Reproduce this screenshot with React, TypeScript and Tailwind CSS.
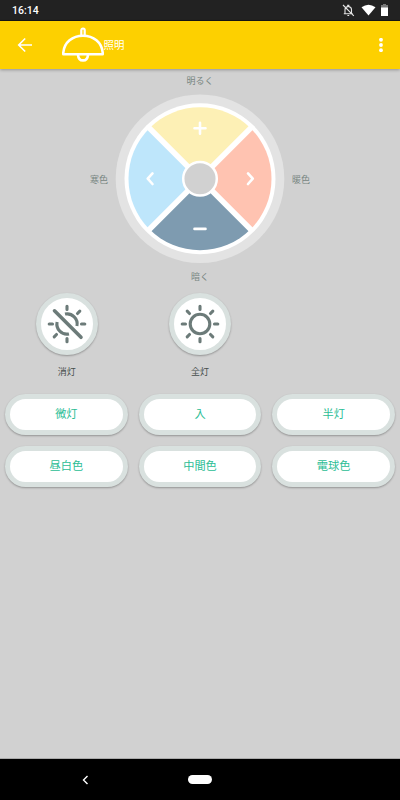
import React from 'react';

const modeButtons = ['微灯', '入', '半灯', '昼白色', '中間色', '電球色'];

const StatusBar: React.FC = () => (
  <div className="flex h-[21px] shrink-0 items-center justify-between border-b border-[#151515] bg-[#222222] pl-3 pr-[12px]">
    <span className="pt-[2px] font-[Roboto] text-[10.5px] font-medium leading-none text-white">16:14</span>
    <div className="flex items-center">
      <svg className="h-[13px] w-[13px]" viewBox="0 0 13 13" fill="none" stroke="#e4e4e4" strokeWidth="1.1">
        <path d="M3 9.5V5.8a3.2 3.2 0 0 1 2.7-3.2V1.2h1.1v1.4a3.2 3.2 0 0 1 2.7 3.2v3.7M1.8 9.8h9M5.4 11.5h1.8M1 1l10.8 10.8" />
      </svg>
      <svg className="ml-[6px] h-[12px] w-[15px]" viewBox="0 0 15 12">
        <path d="M.5 3.2Q7.5-1.8 14.5 3.2L7.5 11.5Z" fill="#fff" />
      </svg>
      <svg className="ml-[5px] h-[12px] w-[7px]" viewBox="0 0 7 12">
        <path d="M2 0h3v1h2v3H0V1h2Z" fill="#777" />
        <path d="M0 3.5h7V12H0Z" fill="#fff" />
      </svg>
    </div>
  </div>
);

const Header: React.FC = () => (
  <header className="z-10 flex h-12 shrink-0 items-center bg-[#fdd000] pl-[17px] pr-[17px] shadow-[0_1px_3px_rgba(0,0,0,0.3)]">
    <svg className="h-4 w-4" viewBox="0 0 16 16" fill="none" stroke="#fff" strokeWidth="1.6">
      <path d="M15 8H2M8.2 1.5 1.7 8l6.5 6.5" />
    </svg>
    <svg className="ml-[29px] h-9 w-[42px]" viewBox="0 0 42 36" fill="none" stroke="#fff" strokeWidth="2.6" strokeLinejoin="round">
      <path d="M1.300 27.300V25.500C2.200 15.500 10.500 8.700 21 8.700S39.800 15.500 40.700 25.500v1.800Z" />
      <path d="M19.300 8.500V3.200a1.700 1.700 0 0 1 3.400 0V8.500" strokeWidth="2.200" />
      <path d="M16 27.800c.3 3.800 2.400 5.600 5 5.600s4.700-1.800 5-5.600" />
    </svg>
    <h1 className="-ml-[0.5px] font-['Noto_Sans_CJK_JP',sans-serif] text-[10.5px] leading-none text-white">照明</h1>
    <svg className="ml-auto h-[14px] w-1" viewBox="0 0 4 14" fill="#fff">
      <circle cx="2" cy="1.8" r="1.9" />
      <circle cx="2" cy="7" r="1.9" />
      <circle cx="2" cy="12.2" r="1.9" />
    </svg>
  </header>
);

const ColorWheel: React.FC = () => (
  <div className="flex flex-col items-center text-[9px] leading-[9px] text-[#788682]">
    <span>明るく</span>
    <div className="mt-[10px] flex items-center gap-2">
      <span>寒色</span>
      <svg className="h-[168px] w-[168px] overflow-visible" viewBox="-84 -83.7 168 168">
        <circle r="84.300" fill="#e3e3e3" />
        <circle r="75.500" fill="#fff" />
        <path d="M0 0-50.560-50.560A71.500 71.500 0 0 1 50.560-50.560Z" fill="#fdf0b5" />
        <path d="M0 0 50.560-50.560A71.500 71.500 0 0 1 50.560 50.560Z" fill="#ffc3b1" />
        <path d="M0 0 50.560 50.560A71.500 71.500 0 0 1-50.560 50.560Z" fill="#7e9bb0" />
        <path d="M0 0-50.560 50.560A71.500 71.500 0 0 1-50.560-50.560Z" fill="#bee6fb" />
        <path d="M-52-52 52 52M52-52-52 52" stroke="#fff" strokeWidth="5.500" />
        <circle r="16.800" fill="#d1d1d1" stroke="#fff" strokeWidth="2.500" />
        <g fill="none" stroke="#fff" strokeWidth="2.600" strokeLinecap="round" strokeLinejoin="round">
          <path d="M-5.500-50.500H5.500M0-56V-45M-5.500 50.200H5.500" />
          <path d="M-47.500-5.300-52.300 0l4.800 5.300M48-5.300 52.800 0l-4.800 5.300" />
        </g>
      </svg>
      <span>暖色</span>
    </div>
    <span className="mt-[9px]">暗く</span>
  </div>
);

const SunIcon: React.FC<{ off?: boolean }> = ({ off }) => (
  <svg className="h-10 w-10" viewBox="-20 -20 40 40" fill="none" stroke="#6c7b79" strokeWidth="3.1" strokeLinecap="round">
    <path d="M0-17.800V-14.500M0 14.500V17.800M-17.800 0H-14.500M14.500 0H17.800M12.800-12.800 10.500-10.500M-12.800 12.800l2.300-2.300" />
    {off ? (
      <>
        <path d="M-2-9.900A10 10 0 0 1 9.900 2M-9.900-2A10 10 0 0 0 2 9.900" strokeLinecap="butt" />
        <path d="M-12.500-13.200 14 13.300" strokeWidth="3.600" />
      </>
    ) : (
      <>
        <circle r="9.800" />
        <path d="M-12.800-12.800l2.300 2.300M12.800 12.800l-2.300-2.300" />
      </>
    )}
  </svg>
);

const RoundButton: React.FC<{ label: string; off?: boolean }> = ({ label, off }) => (
  <div className="flex flex-col items-center">
    <button className="flex h-[62px] w-[62px] items-center justify-center rounded-full border-[5px] border-[#d9e1df] bg-white shadow-[0_1px_2px_rgba(0,0,0,0.3)]">
      <SunIcon off={off} />
    </button>
    <span className="mt-[12px] text-[9px] leading-[9px] text-[#464e4c]">{label}</span>
  </div>
);

const App: React.FC = () => {
  return (
    <div className="flex h-[800px] w-[400px] flex-col overflow-hidden bg-[#d1d1d1] font-['Noto_Sans_CJK_JP',sans-serif]">
      <StatusBar />
      <Header />

      <main className="flex-1 border-b border-[#aaaaaa] pt-[7px]">
        <ColorWheel />

        <div className="mt-[12px] grid grid-cols-3">
          <RoundButton label="消灯" off />
          <RoundButton label="全灯" />
        </div>

        <div className="mt-[17.5px] grid grid-cols-3 gap-x-[11px] gap-y-[11px] px-[5px]">
          {modeButtons.map((label) => (
            <button
              key={label}
              className="h-[41px] rounded-full border-[5px] border-[#d9e1df] bg-white text-[11.2px] leading-none text-[#2bbd95] shadow-[0_1px_2px_rgba(0,0,0,0.3)]"
            >
              {label}
            </button>
          ))}
        </div>
      </main>

      {/* Android navigation bar */}
      <nav className="grid h-[41px] shrink-0 grid-cols-3 items-center bg-black">
        <svg className="ml-[82px] h-[10px] w-[7px]" viewBox="0 0 7 10" fill="none" stroke="#fff" strokeWidth="1.4">
          <path d="M5.500 1 1.500 5l4 4" />
        </svg>
        <div className="h-[9px] w-6 justify-self-center rounded-full bg-white" />
      </nav>
    </div>
  );
};

export default App;
